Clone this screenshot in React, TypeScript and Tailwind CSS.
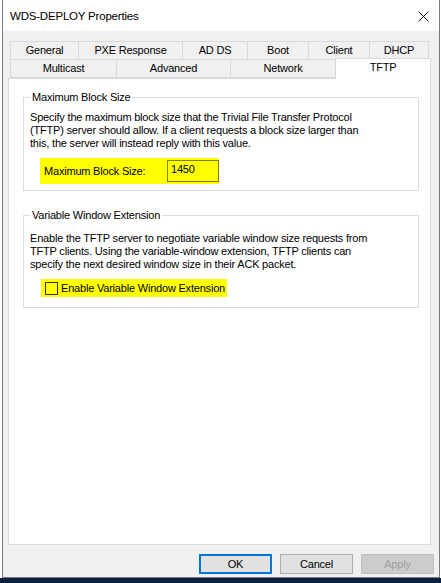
import React from "react";

function Tab({ w, label }: { w: string; label: string }) {
  return (
    <div
      className={`${w} h-full border border-[#d9d9d9] -ml-px first:ml-0 flex items-center justify-center text-black bg-[#f0f0f0]`}
    >
      {label}
    </div>
  );
}

export default function App() {
  return (
    <div className="w-[441px] h-[583px] bg-white overflow-hidden flex flex-col font-['Liberation_Sans',Arial,sans-serif] text-[11px] tracking-[-0.2px] leading-[13px]">
      <div className="flex-1 flex">
        <div className="ml-[2px] w-[438px] h-[578px] border border-[#7a7a7a] border-t-0 flex flex-col bg-[#f0f0f0]">
          {/* title bar */}
          <div className="h-[31px] bg-white flex items-center justify-between pl-[7px] pr-[10px]">
            <span className="text-[11.5px] text-black pt-[1px]">WDS-DEPLOY Properties</span>
            <svg width="11" height="11" viewBox="0 0 11 11" className="mt-[1px]">
              <path d="M0.5 0.5 L10.5 10.5 M10.5 0.5 L0.5 10.5" stroke="#111" strokeWidth="1" />
            </svg>
          </div>
          {/* tabs */}
          <div className="pt-[10px] pl-[7px] flex flex-col">
            <div className="h-[19px] flex">
              <Tab w="w-[69px]" label="General" />
              <Tab w="w-[105px]" label="PXE Response" />
              <Tab w="w-[66px]" label="AD DS" />
              <Tab w="w-[62px]" label="Boot" />
              <Tab w="w-[62px]" label="Client" />
              <Tab w="w-[60px]" label="DHCP" />
            </div>
            <div className="h-[19px] -mt-px flex items-end">
              <Tab w="w-[107px]" label="Multicast" />
              <Tab w="w-[115px]" label="Advanced" />
              <Tab w="w-[106px]" label="Network" />
              <div className="w-[96px] h-[21px] -ml-px border border-[#d9d9d9] border-b-0 bg-white relative z-10 flex items-start justify-center pt-[2px] text-black mb-[-1px]">
                TFTP
              </div>
            </div>
          </div>
          {/* panel */}
          <div className="ml-[5px] w-[423px] h-[467px] bg-white border border-[#d9d9d9] flex flex-col pt-[18px] pl-[14px]">
            {/* group 1 */}
            <div className="w-[396px] h-[94px] border border-[#dcdcdc] relative pl-[6px] pt-[13px]">
              <span className="absolute -top-[7px] left-[6px] bg-white px-[2px] text-black">
                Maximum Block Size
              </span>
              <p className="text-black">
                Specify the maximum block size that the Trivial File Transfer Protocol
                <br />
                (TFTP) server should allow. If a client requests a block size larger than
                <br />
                this, the server will instead reply with this value.
              </p>
              <div className="mt-[8px] ml-[10px] w-[179px] h-[26px] bg-[#ffff00] flex items-center pl-[4px]">
                <span className="w-[123px] text-black">Maximum Block Size:</span>
                <div className="w-[52px] h-[22px] border border-[#7f7f00] pl-[3px] pt-[2px] text-black">
                  1450
                </div>
              </div>
            </div>
            {/* group 2 */}
            <div className="mt-[24px] w-[396px] h-[93px] border border-[#dcdcdc] relative pl-[6px] pt-[16px]">
              <span className="absolute -top-[7px] left-[6px] bg-white px-[2px] text-black">
                Variable Window Extension
              </span>
              <p className="text-black">
                Enable the TFTP server to negotiate variable window size requests from
                <br />
                TFTP clients. Using the variable-window extension, TFTP clients can
                <br />
                specify the next desired window size in their ACK packet.
              </p>
              <div className="mt-[8px] ml-[11px] w-[186px] h-[18px] bg-[#ffff00] flex items-center pl-[4px]">
                <div className="w-[13px] h-[13px] border border-[#333333] shrink-0" />
                <span className="ml-[3px] text-black whitespace-nowrap">Enable Variable Window Extension</span>
              </div>
            </div>
          </div>
          {/* buttons */}
          <div className="mt-[9px] flex justify-end pr-[5px] gap-[8px]">
            <button className="w-[73px] h-[20px] border-2 border-[#0078d7] bg-[#e1e1e1] text-black flex items-center justify-center">
              OK
            </button>
            <button className="w-[73px] h-[20px] border border-[#adadad] bg-[#e1e1e1] text-black flex items-center justify-center">
              Cancel
            </button>
            <button className="w-[73px] h-[20px] border border-[#bfbfbf] bg-[#cccccc] text-[#a0a0a0] flex items-center justify-center">
              Apply
            </button>
          </div>
        </div>
      </div>
      <div className="h-[5px] bg-[#0b2140]" />
    </div>
  );
}
